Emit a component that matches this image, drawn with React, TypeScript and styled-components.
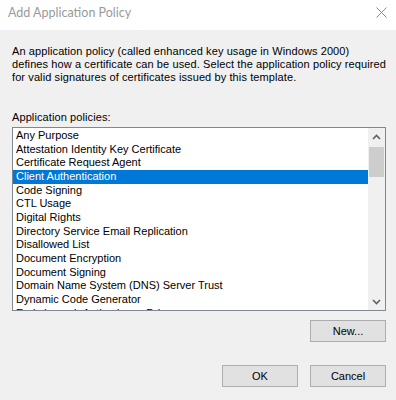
import React from "react";
import styled, { createGlobalStyle } from "styled-components";

const GlobalStyle = createGlobalStyle`
  html, body {
    margin: 0;
    padding: 0;
    background: #f0f0f0;
  }
  body {
    font-family: "Liberation Sans", Arial, sans-serif;
    font-size: 11px;
    color: #000;
  }
`;

const Dialog = styled.div`
  width: 396px;
  height: 400px;
  display: flex;
  flex-direction: column;
  background: #f0f0f0;
  overflow: hidden;
`;

const TitleBar = styled.div`
  height: 30px;
  flex: none;
  background: #fff;
  display: flex;
  align-items: center;
  justify-content: space-between;
  padding: 0 8px 0 8px;
  box-sizing: border-box;
`;

const Title = styled.div`
  font-family: Lato, "Open Sans", sans-serif;
  font-size: 12.5px;
  color: #9a9a9a;
  margin-top: -5px;
`;

const CloseButton = styled.div`
  width: 14px;
  height: 14px;
  display: flex;
  align-items: center;
  justify-content: center;
  margin-top: -5px;
`;

const Body = styled.div`
  flex: 1;
  display: flex;
  flex-direction: column;
  padding: 15px 10px 0 12px;
`;

const Text = styled.p`
  margin: 0;
  line-height: 13px;
  letter-spacing: 0.1px;
  white-space: nowrap;
`;

const Label = styled(Text)`
  margin-top: 27px;
`;

const ListBox = styled.div`
  margin-top: 3px;
  height: 184px;
  box-sizing: border-box;
  border: 1px solid #828790;
  background: #fff;
  display: flex;
  overflow: hidden;
`;

const Items = styled.div`
  flex: 1;
  overflow: hidden;
  padding-top: 1px;
`;

const Item = styled.div<{ $selected?: boolean }>`
  height: 13.67px;
  line-height: 13.67px;
  padding-left: 3px;
  white-space: nowrap;
  background: ${({ $selected }) => ($selected ? "#0078d7" : "transparent")};
  color: ${({ $selected }) => ($selected ? "#fff" : "#000")};
`;

const ScrollBar = styled.div`
  width: 17px;
  flex: none;
  background: #f0f0f0;
  display: flex;
  flex-direction: column;
`;

const Arrow = styled.div`
  height: 17px;
  display: flex;
  align-items: center;
  justify-content: center;
`;

const Track = styled.div`
  flex: 1;
  display: flex;
  flex-direction: column;
  padding: 2px 1px 0 1px;
`;

const Thumb = styled.div`
  height: 30px;
  background: #cdcdcd;
`;

const ButtonRow = styled.div<{ $gap: number }>`
  display: flex;
  justify-content: flex-end;
  gap: 12px;
  margin-top: ${({ $gap }) => $gap}px;
`;

const Button = styled.div`
  width: 76px;
  height: 22px;
  box-sizing: border-box;
  border: 1px solid #adadad;
  background: #e1e1e1;
  display: flex;
  align-items: center;
  justify-content: center;
`;

const policies = [
  "Any Purpose",
  "Attestation Identity Key Certificate",
  "Certificate Request Agent",
  "Client Authentication",
  "Code Signing",
  "CTL Usage",
  "Digital Rights",
  "Directory Service Email Replication",
  "Disallowed List",
  "Document Encryption",
  "Document Signing",
  "Domain Name System (DNS) Server Trust",
  "Dynamic Code Generator",
  "Early Launch Antimalware Driver",
];

const Chevron = ({ up }: { up?: boolean }) => (
  <svg width="9" height="6" viewBox="0 0 9 6">
    <path
      d={up ? "M1 5 L4.5 1.5 L8 5" : "M1 1 L4.5 4.5 L8 1"}
      fill="none"
      stroke="#606060"
      strokeWidth="1.6"
    />
  </svg>
);

export default function App() {
  return (
    <>
      <GlobalStyle />
      <Dialog>
        <TitleBar>
          <Title>Add Application Policy</Title>
          <CloseButton>
            <svg width="11" height="11" viewBox="0 0 11 11">
              <path d="M0.5 0.5 L10.5 10.5 M10.5 0.5 L0.5 10.5" stroke="#8a8a8a" strokeWidth="1" />
            </svg>
          </CloseButton>
        </TitleBar>
        <Body>
          <Text>
            An application policy (called enhanced key usage in Windows 2000)
            <br />
            defines how a certificate can be used. Select the application policy required
            <br />
            for valid signatures of certificates issued by this template.
          </Text>
          <Label>Application policies:</Label>
          <ListBox>
            <Items>
              {policies.map((p) => (
                <Item key={p} $selected={p === "Client Authentication"}>
                  {p}
                </Item>
              ))}
            </Items>
            <ScrollBar>
              <Arrow>
                <Chevron up />
              </Arrow>
              <Track>
                <Thumb />
              </Track>
              <Arrow>
                <Chevron />
              </Arrow>
            </ScrollBar>
          </ListBox>
          <ButtonRow $gap={9}>
            <Button>New...</Button>
          </ButtonRow>
          <ButtonRow $gap={23}>
            <Button>OK</Button>
            <Button>Cancel</Button>
          </ButtonRow>
        </Body>
      </Dialog>
    </>
  );
}
